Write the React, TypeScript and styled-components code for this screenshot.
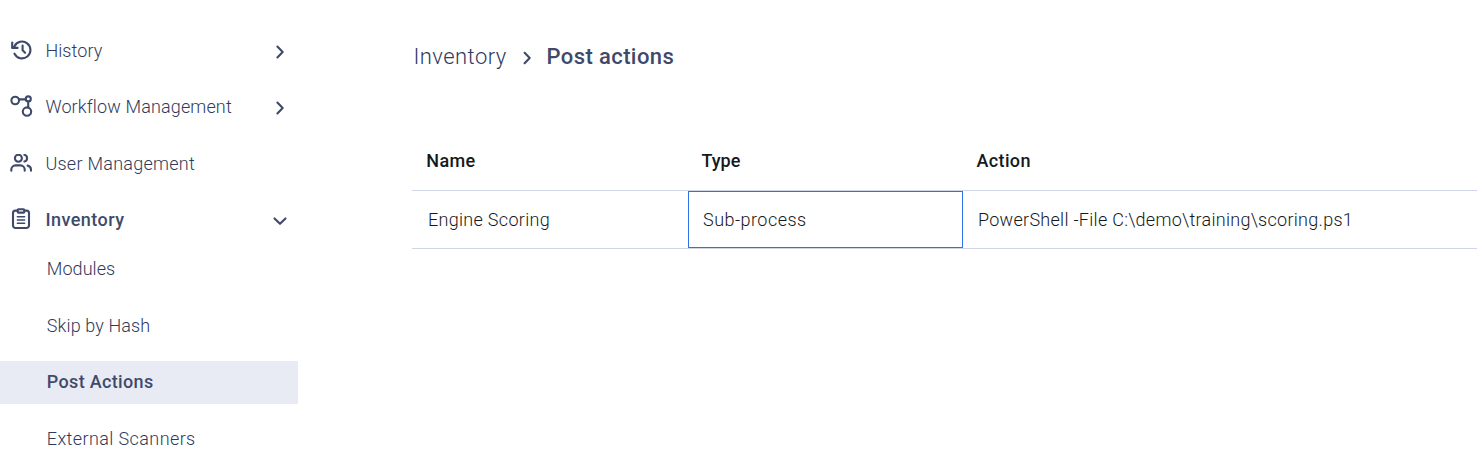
import React from "react";
import styled, { createGlobalStyle } from "styled-components";

const GlobalStyle = createGlobalStyle`
  * { box-sizing: border-box; }
  body {
    margin: 0;
    background: #fff;
    font-family: Roboto, "Liberation Sans", sans-serif;
    overflow: hidden;
  }
`;

const ink = "#3f4a6b";
const lightInk = "#303a5c";

const Page = styled.div`
  display: flex;
  width: 100%;
  height: 460px;
  overflow: hidden;
  color: ${lightInk};
`;

const Sidebar = styled.nav`
  flex: none;
  width: 298px;
  padding-top: 23px;
`;

const NavItem = styled.div`
  display: flex;
  align-items: center;
  height: 56px;
  padding: 0 9px 0 10px;

  &:nth-child(2) {
    height: 57px;
    padding-bottom: 1px;
  }
`;

const SubList = styled.div`
  margin-top: -0.4px;
`;

const SubItem = styled.div<{ $active?: boolean }>`
  display: flex;
  align-items: center;
  height: 43px;
  margin-bottom: 13.5px;
  padding-left: 46.8px;
  background: ${(p) => (p.$active ? "#e8ebf3" : "transparent")};
`;

const Text = styled.span<{ $bold?: boolean; $track?: number }>`
  font-size: 18px;
  line-height: 24px;
  font-weight: ${(p) => (p.$bold ? 500 : 300)};
  letter-spacing: ${(p) => p.$track ?? 0}px;
  white-space: nowrap;
`;

const SideText = styled(Text)`
  color: ${(p) => (p.$bold ? ink : lightInk)};
`;

const NavText = styled(SideText)`
  flex: 1;
  margin-left: 12.4px;
`;

const Icon = styled.svg`
  flex: none;
  display: block;
  fill: none;
  stroke: ${ink};
  stroke-width: 2.1;
  stroke-linecap: round;
  stroke-linejoin: round;
`;

const Main = styled.main`
  flex: 1;
  min-width: 0;
  padding: 42px 0 0 114px;
`;

const Breadcrumb = styled.div`
  display: flex;
  align-items: center;
  height: 30px;
  padding-left: 1.5px;
`;

const Crumb = styled(SideText)`
  font-size: 22px;
  line-height: 30px;
`;

const CrumbSlot = styled.div`
  display: flex;
  width: 133px;
  justify-content: space-between;
  align-items: center;
  padding-right: 14px;
`;

const Table = styled.div`
  margin-top: 60px;
  color: #15191c;
`;

const Row = styled.div<{ $head?: boolean }>`
  display: grid;
  grid-template-columns: 276px 275px 1fr;
  height: ${(p) => (p.$head ? 59 : 58)}px;
  border-bottom: 1px solid #d0d6e8;
`;

const Cell = styled.div<{ $head?: boolean; $selected?: boolean }>`
  display: flex;
  align-items: center;
  padding-left: ${(p) => (p.$head ? 13.5 : p.$selected ? 14 : 15)}px;
  border: 1px solid ${(p) => (p.$selected ? "#2f72e8" : "transparent")};
  border-left-width: ${(p) => (p.$selected ? 1 : 0)}px;

  &:first-child {
    padding-left: ${(p) => (p.$head ? 14.3 : 16)}px;
  }
`;

const HistoryIcon = () => (
  <Icon width="23" height="22" viewBox="10 39.5 23 22">
    <path d="M14.5 53.2a8.4 8.4 0 1 0-.1-7.2L12.6 47.2" />
    <path d="M12.2 42v5.4h5.4M22.6 45v4.8l2.5 2.5" />
  </Icon>
);

const WorkflowIcon = () => (
  <Icon width="23" height="24" viewBox="10 95 23 24">
    <circle cx="15.2" cy="100.5" r="3.8" />
    <circle cx="28.3" cy="98.9" r="2.5" />
    <circle cx="27" cy="111.6" r="4.2" />
    <path d="M19.2 99.4h6.4M28.2 101.5v6" />
  </Icon>
);

const UsersIcon = () => (
  <Icon width="23" height="20" viewBox="10 154 23 20">
    <circle cx="18.4" cy="158.2" r="3.5" />
    <path d="M11.3 170.8v-1.2a4.2 4.2 0 0 1 4.2-4.2h5a4.2 4.2 0 0 1 4.2 4.2v1.2" />
    <path d="M24.4 154.8a3.5 3.5 0 0 1 0 6.8M27.6 165.6a4.2 4.2 0 0 1 3.4 4.1v1.1" />
  </Icon>
);

const ClipboardIcon = () => (
  <Icon width="23" height="22" viewBox="10 208 23 22">
    <path d="M17.5 210.6h-2a2.5 2.5 0 0 0-2.5 2.5v12.4a2.5 2.5 0 0 0 2.5 2.5h11a2.5 2.5 0 0 0 2.5-2.5v-12.4a2.5 2.5 0 0 0-2.5-2.5h-2" />
    <rect x="17.7" y="209.2" width="6.6" height="3.4" rx="0.8" />
    <path strokeWidth="1.6" d="M17.4 216.8h7.2M17.4 220h7.2M17.4 223.2h7.2" />
  </Icon>
);

const ClipboardSlot = styled.div`
  flex: none;
  padding-bottom: 2px;
`;

const ChevronRight = () => (
  <Icon width="19" height="16" viewBox="0 0 19 16">
    <path d="M7.4 3.5l5.3 5.5-5.3 5.5" />
  </Icon>
);

const ChevronDown = () => (
  <Icon width="19" height="16" viewBox="0 0 19 16">
    <path d="M4.5 6.4l5.5 5.4 5.5-5.4" />
  </Icon>
);

const CrumbChevron = () => (
  <Icon width="10" height="16" viewBox="0 0 10 16">
    <path d="M1.6 3.8l5.1 5.2-5.1 5.2" />
  </Icon>
);

export default function App() {
  return (
    <>
      <GlobalStyle />
      <Page>
        <Sidebar>
          <NavItem>
            <HistoryIcon />
            <NavText $track={0.08}>History</NavText>
            <ChevronRight />
          </NavItem>
          <NavItem>
            <WorkflowIcon />
            <NavText $track={0.13}>Workflow Management</NavText>
            <ChevronRight />
          </NavItem>
          <NavItem>
            <UsersIcon />
            <NavText $track={0.26}>User Management</NavText>
          </NavItem>
          <NavItem>
            <ClipboardSlot>
              <ClipboardIcon />
            </ClipboardSlot>
            <NavText $bold $track={0.47}>Inventory</NavText>
            <ChevronDown />
          </NavItem>
          <SubList>
            <SubItem><SideText $track={0.06}>Modules</SideText></SubItem>
            <SubItem><SideText $track={0.11}>Skip by Hash</SideText></SubItem>
            <SubItem $active><SideText $bold $track={0.33}>Post Actions</SideText></SubItem>
            <SubItem><SideText $track={0.4}>External Scanners</SideText></SubItem>
          </SubList>
        </Sidebar>
        <Main>
          <Breadcrumb>
            <CrumbSlot>
              <Crumb $track={0.45}>Inventory</Crumb>
              <CrumbChevron />
            </CrumbSlot>
            <Crumb $bold $track={0.4}>Post actions</Crumb>
          </Breadcrumb>
          <Table>
            <Row $head>
              <Cell $head><Text $bold $track={0.35}>Name</Text></Cell>
              <Cell $head><Text $bold $track={0}>Type</Text></Cell>
              <Cell $head><Text $bold $track={0.35}>Action</Text></Cell>
            </Row>
            <Row>
              <Cell><Text $track={0.3}>Engine Scoring</Text></Cell>
              <Cell $selected><Text $track={0.46}>Sub-process</Text></Cell>
              <Cell><Text $track={0.28}>PowerShell -File C:\demo\training\scoring.ps1</Text></Cell>
            </Row>
          </Table>
        </Main>
      </Page>
    </>
  );
}
